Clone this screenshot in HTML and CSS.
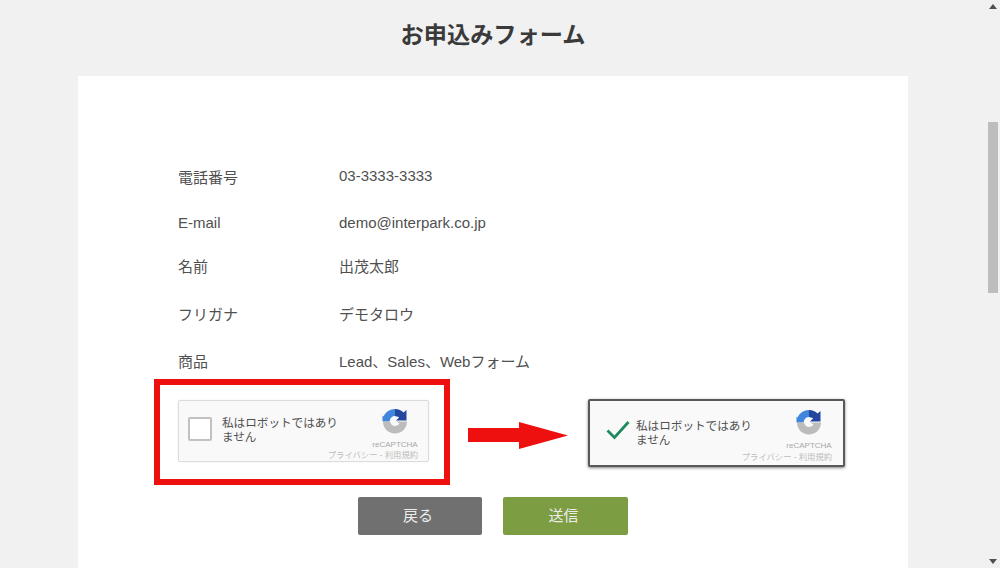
FILE: index.html
```html
<!DOCTYPE html>
<html lang="ja">
<head>
<meta charset="utf-8">
<title>お申込みフォーム</title>
<link rel="stylesheet" href="styles.css">
</head>
<body>
<main class="page">
  <h1 class="title">お申込みフォーム</h1>
  <section class="card">
    <dl class="details">
      <div class="row"><dt class="lowered">電話番号</dt><dd class="raised">03-3333-3333</dd></div>
      <div class="row"><dt>E-mail</dt><dd>demo@interpark.co.jp</dd></div>
      <div class="row"><dt>名前</dt><dd>出茂太郎</dd></div>
      <div class="row"><dt>フリガナ</dt><dd>デモタロウ</dd></div>
      <div class="row"><dt>商品</dt><dd>Lead、Sales、Webフォーム</dd></div>
    </dl>
    <div class="demo">
      <div class="frame">
        <div class="captcha">
          <div class="captcha-top">
            <span class="box"></span>
            <span class="label">私はロボットではありません</span>
            <div class="brand">
              <svg class="logo" viewBox="0 0 26 26" aria-hidden="true">
                <path d="M13 1C8 1 3.500 4 1.500 8.500L0.500 7.500V13.500H7.500C8 10 10 8 13 8L15.500 9Z" fill="#3f86dc"/>
                <path d="M13 1C16.500 1 19.500 2.500 21.500 4.500L24.500 2V12.500H14L17 9.500C16 8.500 14.500 8 13 8Z" fill="#23479f"/>
                <path d="M1 13.500H8C8.500 16 10.500 18 13 18C15 18 16.500 17 17.500 15.500L14.500 13.500H25C25 20.500 19.500 25.500 13 25.500C6.500 25.500 1 20.500 1 13.500Z" fill="#bcbcbc"/>
              </svg>
              <span class="brand-name">reCAPTCHA</span>
            </div>
          </div>
          <div class="terms">プライバシー - 利用規約</div>
        </div>
      </div>
      <svg class="arrow" viewBox="0 0 100 27" aria-hidden="true">
        <path d="M0 6H51V0L100 13.500L51 27V20H0Z" fill="#ee0f0f"/>
      </svg>
      <div class="captcha captcha-done">
        <div class="captcha-top">
          <svg class="check" viewBox="0 0 24 20" aria-hidden="true">
            <path d="M1.500 10.500L8.500 17.500L22.500 2" fill="none" stroke="#1f8a5f" stroke-width="2.800"/>
          </svg>
          <span class="label">私はロボットではありません</span>
          <div class="brand">
            <svg class="logo" viewBox="0 0 26 26" aria-hidden="true">
              <path d="M13 1C8 1 3.500 4 1.500 8.500L0.500 7.500V13.500H7.500C8 10 10 8 13 8L15.500 9Z" fill="#3f86dc"/>
              <path d="M13 1C16.500 1 19.500 2.500 21.500 4.500L24.500 2V12.500H14L17 9.500C16 8.500 14.500 8 13 8Z" fill="#23479f"/>
              <path d="M1 13.500H8C8.500 16 10.500 18 13 18C15 18 16.500 17 17.500 15.500L14.500 13.500H25C25 20.500 19.500 25.500 13 25.500C6.500 25.500 1 20.500 1 13.500Z" fill="#bcbcbc"/>
            </svg>
            <span class="brand-name">reCAPTCHA</span>
          </div>
        </div>
        <div class="terms">プライバシー - 利用規約</div>
      </div>
    </div>
    <div class="actions">
      <button class="btn btn-back" type="button">戻る</button>
      <button class="btn btn-send" type="button">送信</button>
    </div>
  </section>
</main>
<aside class="scrollbar" aria-hidden="true">
  <span class="tri tri-up"></span>
  <span class="thumb"></span>
  <span class="tri tri-down"></span>
</aside>
</body>
</html>
```
FILE: styles.css
```css
* { box-sizing: border-box; }
html, body { margin: 0; height: 100%; }
body {
  display: flex;
  height: 568px;
  overflow: hidden;
  background: #f1f1f1;
  color: #505050;
  font-family: "Liberation Sans", "Noto Sans CJK JP", sans-serif;
  font-size: 15px;
}
.page {
  width: 986px;
  padding: 0 78px;
  display: flex;
  flex-direction: column;
}
.title {
  margin: 0;
  height: 76px;
  padding-top: 18px;
  text-align: center;
  font-size: 23.200px;
  line-height: 34px;
  font-weight: 700;
  color: #3a3a3a;
}
.card {
  flex: 1;
  background: #fff;
  padding-top: 89px;
}
.details {
  margin: 0;
  padding-left: 100px;
  display: grid;
  grid-template-rows: 46px 44px 48px 47px 29px;
}
.row {
  display: flex;
  line-height: 24px;
}
.row dt { width: 161px; }
.row dt.lowered { padding-top: 1px; }
.row dd { margin: 0; }
.row dd.raised { margin-top: -1px; }
.demo {
  display: flex;
  padding-left: 76px;
}
.frame {
  width: 296px;
  height: 106px;
  border: 6px solid #ee0f0f;
  padding: 15px 0 0 18px;
  margin-right: 18px;
}
.captcha {
  width: 251px;
  height: 62px;
  border: 1px solid #dcdcdc;
  border-radius: 2px;
  background: #f9f9f9;
  box-shadow: 0 0 2px rgba(0, 0, 0, .08);
  padding: 7px 10px 0 9px;
  display: flex;
  flex-direction: column;
}
.captcha-top {
  flex: 1;
  display: flex;
  align-items: flex-start;
}
.box {
  flex: none;
  width: 24px;
  height: 24px;
  margin-top: 9px;
  border: 2px solid #c1c1c1;
  border-radius: 2px;
  background: #fff;
}
.label {
  width: 122px;
  margin: 8px 0 0 10px;
  font-size: 11.600px;
  line-height: 14px;
  color: #505050;
}
.brand {
  margin-left: auto;
  display: flex;
  flex-direction: column;
  align-items: center;
  width: 46px;
}
.logo {
  width: 26px;
  height: 26px;
  filter: blur(.4px);
}
.brand-name {
  margin-top: 6px;
  font-size: 8px;
  line-height: 10px;
  color: #a8a8a8;
}
.terms {
  height: 13px;
  text-align: right;
  font-size: 8.300px;
  line-height: 11px;
  color: #bcbcbc;
  white-space: nowrap;
}
.arrow {
  width: 100px;
  height: 27px;
  margin-top: 43px;
  margin-right: 20px;
  flex: none;
}
.captcha-done {
  width: 257px;
  height: 68px;
  margin-top: 20px;
  border: 2px solid #585858;
  border-radius: 2px;
  box-shadow: 0 1px 3px rgba(0, 0, 0, .5);
  padding: 8px 11px 0 16px;
}
.check {
  flex: none;
  width: 24px;
  height: 20px;
  margin-top: 11px;
}
.captcha-done .label { margin: 10px 0 0 6px; }
.actions {
  display: flex;
  justify-content: center;
  gap: 21px;
  margin-top: 12px;
}
.btn {
  width: 124px;
  height: 38px;
  border: 0;
  border-radius: 2px;
  color: #ececec;
  font-family: inherit;
  font-size: 15px;
  padding: 0 4px 3px 0;
}
.btn-back { background: #707070; }
.btn-send { background: #7c9d41; width: 125px; }
.scrollbar {
  width: 14px;
  display: flex;
  flex-direction: column;
  align-items: center;
  padding: 4px 0 4px;
}
.tri {
  width: 0;
  height: 0;
  border-left: 4px solid transparent;
  border-right: 4px solid transparent;
}
.tri-up { border-bottom: 5px solid #505050; }
.tri-down { border-top: 5px solid #505050; margin-top: auto; }
.thumb {
  width: 10px;
  height: 171px;
  margin-top: 113px;
  background: #bdbdbd;
}
```
